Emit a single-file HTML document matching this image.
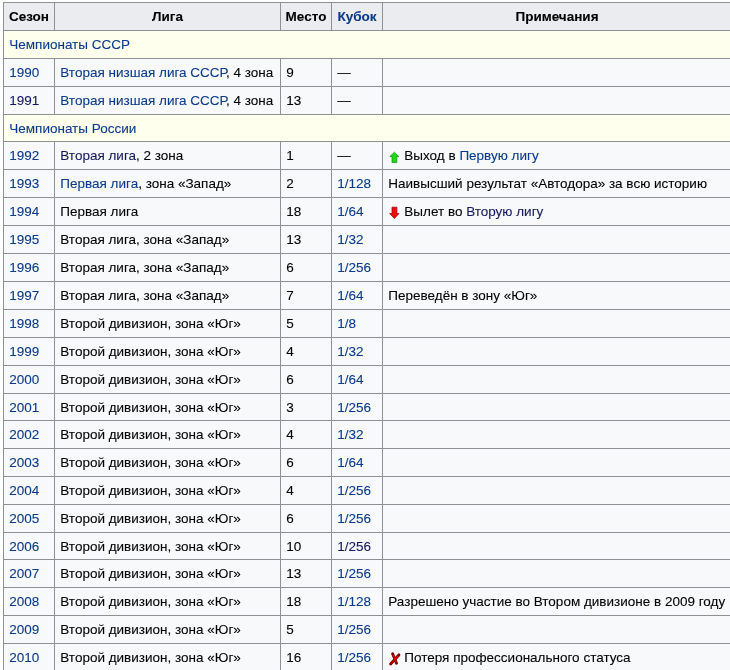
<!DOCTYPE html>
<html><head><meta charset="utf-8">
<style>
html,body{margin:0;padding:0;background:#fff;width:730px;height:670px;overflow:hidden}
table{position:absolute;left:3px;top:2px;border-collapse:separate;border-spacing:0;table-layout:fixed;
 font-family:"Liberation Sans",sans-serif;font-size:13.5px;color:#000;-webkit-text-stroke:0.1px currentColor;
 border-top:1px solid #8e9094;border-left:1px solid #8e9094;width:729px;will-change:transform}
td,th{border-right:1px solid #8e9094;border-bottom:1px solid #8e9094;padding:4.44px 0 0 5.3px;height:auto;line-height:20px;vertical-align:top;box-sizing:border-box;white-space:nowrap;overflow:hidden;background:#f8f9fa;text-align:left}
th{background:#eaecf0;font-weight:bold;text-align:center;padding:4.44px 0 0 0}
tr.s td{background:#ffffee}
a{text-decoration:none}
.up,.dn,.xx{display:inline-block;width:16px;height:1px}
svg.ic{position:absolute;left:0;top:0;width:730px;height:670px;pointer-events:none}
</style></head><body>
<table>
<colgroup><col style="width:51px"><col style="width:226px"><col style="width:51px"><col style="width:51px"><col style="width:349px"></colgroup>
<tr style="height:28px"><th>Сезон</th><th>Лига</th><th>Место</th><th><a style="color:#0a3a88">Кубок</a></th><th>Примечания</th></tr>
<tr class="s" style="height:28px"><td colspan="5"><a style="color:#0a3a88">Чемпионаты СССР</a></td></tr>
<tr style="height:28px"><td><a style="color:#0a3a88">1990</a></td><td><a style="color:#0a3a88">Вторая низшая лига СССР</a>, 4 зона</td><td>9</td><td>—</td><td></td></tr>
<tr style="height:28px"><td><a style="color:#15195e">1991</a></td><td><a style="color:#0a3a88">Вторая низшая лига СССР</a>, 4 зона</td><td>13</td><td>—</td><td></td></tr>
<tr class="s" style="height:27px"><td colspan="5"><a style="color:#0a3a88">Чемпионаты России</a></td></tr>
<tr style="height:28px"><td><a style="color:#0a3a88">1992</a></td><td><a style="color:#15195e">Вторая лига</a>, 2 зона</td><td>1</td><td>—</td><td><span class="up"></span>Выход в <a style="color:#0a3a88">Первую лигу</a></td></tr>
<tr style="height:28px"><td><a style="color:#0a3a88">1993</a></td><td><a style="color:#0a3a88">Первая лига</a>, зона «Запад»</td><td>2</td><td><a style="color:#0a3a88">1/128</a></td><td>Наивысший результат «Автодора» за всю историю</td></tr>
<tr style="height:28px"><td><a style="color:#0a3a88">1994</a></td><td>Первая лига</td><td>18</td><td><a style="color:#0a3a88">1/64</a></td><td><span class="dn"></span>Вылет во <a style="color:#15195e">Вторую лигу</a></td></tr>
<tr style="height:28px"><td><a style="color:#0a3a88">1995</a></td><td>Вторая лига, зона «Запад»</td><td>13</td><td><a style="color:#0a3a88">1/32</a></td><td></td></tr>
<tr style="height:28px"><td><a style="color:#0a3a88">1996</a></td><td>Вторая лига, зона «Запад»</td><td>6</td><td><a style="color:#0a3a88">1/256</a></td><td></td></tr>
<tr style="height:28px"><td><a style="color:#0a3a88">1997</a></td><td>Вторая лига, зона «Запад»</td><td>7</td><td><a style="color:#0a3a88">1/64</a></td><td>Переведён в зону «Юг»</td></tr>
<tr style="height:28px"><td><a style="color:#0a3a88">1998</a></td><td>Второй дивизион, зона «Юг»</td><td>5</td><td><a style="color:#0a3a88">1/8</a></td><td></td></tr>
<tr style="height:28px"><td><a style="color:#0a3a88">1999</a></td><td>Второй дивизион, зона «Юг»</td><td>4</td><td><a style="color:#0a3a88">1/32</a></td><td></td></tr>
<tr style="height:28px"><td><a style="color:#0a3a88">2000</a></td><td>Второй дивизион, зона «Юг»</td><td>6</td><td><a style="color:#0a3a88">1/64</a></td><td></td></tr>
<tr style="height:27px"><td><a style="color:#0a3a88">2001</a></td><td>Второй дивизион, зона «Юг»</td><td>3</td><td><a style="color:#0a3a88">1/256</a></td><td></td></tr>
<tr style="height:28px"><td><a style="color:#0a3a88">2002</a></td><td>Второй дивизион, зона «Юг»</td><td>4</td><td><a style="color:#0a3a88">1/32</a></td><td></td></tr>
<tr style="height:28px"><td><a style="color:#0a3a88">2003</a></td><td>Второй дивизион, зона «Юг»</td><td>6</td><td><a style="color:#0a3a88">1/64</a></td><td></td></tr>
<tr style="height:28px"><td><a style="color:#0a3a88">2004</a></td><td>Второй дивизион, зона «Юг»</td><td>4</td><td><a style="color:#0a3a88">1/256</a></td><td></td></tr>
<tr style="height:28px"><td><a style="color:#0a3a88">2005</a></td><td>Второй дивизион, зона «Юг»</td><td>6</td><td><a style="color:#0a3a88">1/256</a></td><td></td></tr>
<tr style="height:27px"><td><a style="color:#0a3a88">2006</a></td><td>Второй дивизион, зона «Юг»</td><td>10</td><td><a style="color:#15195e">1/256</a></td><td></td></tr>
<tr style="height:28px"><td><a style="color:#0a3a88">2007</a></td><td>Второй дивизион, зона «Юг»</td><td>13</td><td><a style="color:#0a3a88">1/256</a></td><td></td></tr>
<tr style="height:28px"><td><a style="color:#0a3a88">2008</a></td><td>Второй дивизион, зона «Юг»</td><td>18</td><td><a style="color:#0a3a88">1/128</a></td><td>Разрешено участие во Втором дивизионе в 2009 году</td></tr>
<tr style="height:28px"><td><a style="color:#0a3a88">2009</a></td><td>Второй дивизион, зона «Юг»</td><td>5</td><td><a style="color:#0a3a88">1/256</a></td><td></td></tr>
<tr style="height:28px"><td><a style="color:#0a3a88">2010</a></td><td>Второй дивизион, зона «Юг»</td><td>16</td><td><a style="color:#0a3a88">1/256</a></td><td><span class="xx"></span>Потеря профессионального статуса</td></tr>
</table>
<svg class="ic" viewBox="0 0 730 670">
<path d="M394.4,152.2 L398.9,156.6 L396.8,156.6 L396.8,162.6 L392,162.6 L392,156.6 L389.9,156.6 Z" fill="#1fd716" stroke="#128c10" stroke-width="0.7" stroke-linejoin="round"/>
<path d="M394.4,218.6 L399.0,213.5 L396.9,213.5 L396.9,207.2 L392,207.2 L392,213.5 L389.7,213.5 Z" fill="#f50808" stroke="#8a0000" stroke-width="0.7" stroke-linejoin="round"/>
<path d="M392.6,653.8 L396.5,663.2" stroke="#7a0000" stroke-width="2.9" stroke-linecap="round"/>
<path d="M398.9,654.9 L390.6,664.0" stroke="#7a0000" stroke-width="2.9" stroke-linecap="round"/>
<path d="M393.2,655 L395.9,662" stroke="#e80000" stroke-width="1.1" stroke-linecap="round"/>
<path d="M398,656 L391.6,663" stroke="#e80000" stroke-width="1.1" stroke-linecap="round"/>
</svg>
</body></html>
